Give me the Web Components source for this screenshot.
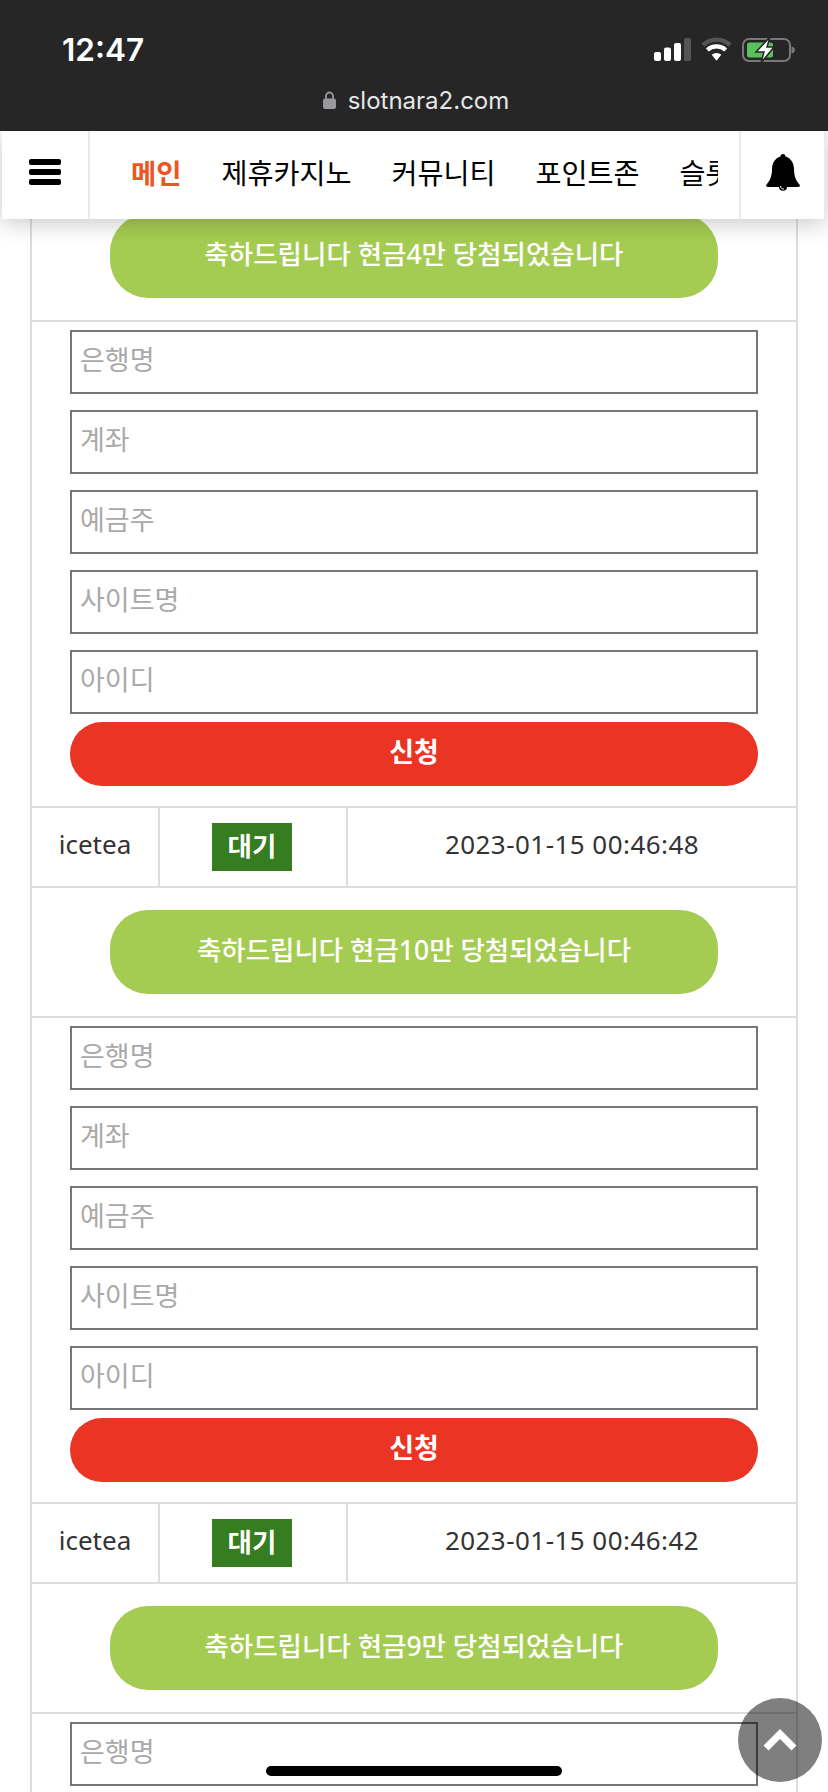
<!DOCTYPE html>
<html>
<head>
<meta charset="utf-8">
<title>slotnara2</title>
<style>
html, body { margin: 0; padding: 0; background: #fff; }
body { font-family: "Noto Sans", "Noto Sans CJK KR", sans-serif; width: 828px; height: 1792px; overflow: hidden; position: relative; }
</style>
</head>
<body>
<status-bar time="12:47" url="slotnara2.com"></status-bar>
<top-nav></top-nav>
<win-list>
  <win-entry prize="축하드립니다 현금4만 당첨되었습니다" user="icetea" date="2023-01-15 00:46:48"></win-entry>
  <win-entry prize="축하드립니다 현금10만 당첨되었습니다" user="icetea" date="2023-01-15 00:46:42"></win-entry>
  <win-entry prize="축하드립니다 현금9만 당첨되었습니다" partial></win-entry>
</win-list>
<scroll-top></scroll-top>
<home-bar></home-bar>

<script>
class StatusBar extends HTMLElement {
    connectedCallback(){
        this.attachShadow({mode:"open"});
        this.shadowRoot.innerHTML = `
<style>
:host { display: block; height: 131px; background: #262626; color: #fff; box-sizing: border-box; position: relative; z-index: 3; font-family: Inter, "Noto Sans", sans-serif; }
#top { display: flex; justify-content: space-between; align-items: center; height: 82px; padding: 17px 33px 0 62px; box-sizing: border-box; }
#time { font-size: 31.500px; font-weight: 600; line-height: 1; }
#icons { display: flex; align-items: center; gap: 10px; }
#url { display: flex; justify-content: center; align-items: center; gap: 12px; height: 22px; margin-top: 7px; padding-left: 4px; font-size: 24px; color: #e6e6e6; }
svg { display: block; }
</style>
<div id="top">
  <div id="time">${this.getAttribute("time")}</div>
  <div id="icons">
    <svg width="37" height="24" viewBox="0 0 37 24">
      <rect x="0" y="14" width="7" height="9" rx="2" fill="#fff"/>
      <rect x="10" y="9.500" width="7" height="13.500" rx="2" fill="#fff"/>
      <rect x="20" y="5" width="7" height="18" rx="2" fill="#fff"/>
      <rect x="30" y="0" width="7" height="23" rx="2" fill="#555"/>
    </svg>
    <svg width="31" height="25" viewBox="0 0 32 25">
      <path d="M2 8 A 20 20 0 0 1 30 8" fill="none" stroke="#555" stroke-width="4.500"/>
      <path d="M6.500 13 A 14 14 0 0 1 25.500 13" fill="none" stroke="#fff" stroke-width="4.500"/>
      <path d="M11 18 A 7.500 7.500 0 0 1 21 18 L 16 24 Z" fill="#fff"/>
    </svg>
    <svg width="53" height="26" viewBox="0 0 53 26">
      <rect x="1" y="2" width="47" height="22" rx="6" fill="none" stroke="#777" stroke-width="2"/>
      <rect x="5" y="5.500" width="26" height="15" rx="2.500" fill="#5ac05e"/>
      <path d="M49.500 9.500 Q53 10.500 53 13 Q53 15.500 49.500 16.500 Z" fill="#777"/>
      <path d="M28 0 L14 15 L22 15 L19 26 L32 10 L25 10 Z" fill="#fff" stroke="#262626" stroke-width="1.500"/>
    </svg>
  </div>
</div>
<div id="url">
  <svg width="13" height="18" viewBox="0 0 13 18">
    <path d="M3 8 V5 a3.500 3.500 0 0 1 7 0 V8" fill="none" stroke="#98989d" stroke-width="1.800"/>
    <rect x="0" y="7.500" width="13" height="10.500" rx="2" fill="#98989d"/>
  </svg>
  <span>${this.getAttribute("url")}</span>
</div>`;
    }
}
customElements.define("status-bar", StatusBar);

class TopNav extends HTMLElement {
    connectedCallback(){
        this.attachShadow({mode:"open"});
        this.shadowRoot.innerHTML = `
<style>
:host { display: flex; position: relative; z-index: 2; height: 88px; margin: 0 2px; background: #fff; box-shadow: 0 4px 22px rgba(0,0,0,.22); font-family: Inter, "Noto Sans CJK KR", sans-serif; }
#menu { width: 86px; flex: none; border-right: 2px solid #ebebeb; display: flex; align-items: center; justify-content: center; padding-bottom: 6px; }
#items { flex: 1; min-width: 0; display: flex; align-items: center; gap: 40px; padding: 0 0 7px 41px; margin-right: 21px; overflow: hidden; white-space: nowrap; font-size: 28.250px; color: #000; }
#items span { flex: none; }
#items .on { color: #ee5524; font-weight: 700; font-size: 27.500px; }
#bell { width: 87px; flex: none; border-left: 2px solid #ebebeb; border-right: 2px solid #ebebeb; box-sizing: border-box; display: flex; align-items: center; justify-content: center; padding-bottom: 6px; }
svg { display: block; }
</style>
<div id="menu">
  <svg width="32" height="26" viewBox="0 0 32 26">
    <rect x="0" y="0" width="32" height="6" rx="2"/>
    <rect x="0" y="10" width="32" height="6" rx="2"/>
    <rect x="0" y="20" width="32" height="6" rx="2"/>
  </svg>
</div>
<div id="items">
  <span class="on">메인</span><span>제휴카지노</span><span>커뮤니티</span><span>포인트존</span><span>슬롯게임</span>
</div>
<div id="bell">
  <svg width="34" height="37" viewBox="0 0 34 37">
    <path d="M17 0 c1.500 0 2.500 1 2.500 2.500 C25 4 28 9.500 28 15 c0 8 2.500 12 5.500 15.500 c.8 1 .3 2.500 -1.200 2.500 H1.700 C.2 33 -.3 31.500 .5 30.500 C3.500 27 6 23 6 15 C6 9.500 9 4 14.500 2.500 C14.500 1 15.500 0 17 0 Z"/>
    <path d="M13 33 a4 3.800 0 0 0 8 0 Z"/>
    <path d="M14.500 32 a3 3 0 0 0 3.500 3" fill="none" stroke="#fff" stroke-width="1"/>
  </svg>
</div>`;
    }
}
customElements.define("top-nav", TopNav);

class WinList extends HTMLElement {
    connectedCallback(){
        this.attachShadow({mode:"open"});
        this.shadowRoot.innerHTML = `
<style>
:host { display: block; height: 1600px; overflow: hidden; margin: -27px 30px 0 30px; border-left: 2px solid #ddd; border-right: 2px solid #ddd; }
</style>
<slot></slot>`;
    }
}
customElements.define("win-list", WinList);

class WinEntry extends HTMLElement {
    connectedCallback(){
        this.attachShadow({mode:"open"});
        var partial = this.hasAttribute("partial");
        var fields = partial ? ["은행명"] : ["은행명","계좌","예금주","사이트명","아이디"];
        this.shadowRoot.innerHTML = `
<style>
:host { display: block; }
#prize { height: 130px; box-sizing: border-box; padding-top: 22px; display: flex; justify-content: center; border-bottom: 2px solid #ddd; }
#prize div { width: 608px; height: 84px; border-radius: 38px; background: #a5cc52; color: #fff; font-size: 26.500px; font-weight: 500; display: flex; align-items: center; justify-content: center; padding-bottom: 8px; box-sizing: border-box; }
form { display: flex; flex-direction: column; padding: 8px 38px 20px 38px; border-bottom: 2px solid #ddd; }
.in { height: 64px; box-sizing: border-box; border: 2px solid #767676; margin-bottom: 16px; padding: 0 8px 8px 8px; font-size: 27px; color: #a9a9a9; display: flex; align-items: center; }
.in.last { margin-bottom: 8px; }
#go { height: 64px; border-radius: 32px; background: #ea3424; color: #fff; font-size: 27px; font-weight: 700; display: flex; align-items: center; justify-content: center; padding-bottom: 7px; box-sizing: border-box; }
#info { display: grid; grid-template-columns: 126px 188px 1fr; height: 80px; box-sizing: border-box; border-bottom: 2px solid #ddd; color: #333; font-size: 26px; }
#info > div { display: flex; align-items: center; justify-content: center; padding-bottom: 6px; }
#info > div + div { border-left: 2px solid #ddd; }
#info > div:nth-child(2) { padding-bottom: 0; padding-right: 2px; }
#info > div:nth-child(3) { letter-spacing: .45px; }
#badge { width: 80px; height: 48px; background: #367c20; color: #fff; font-size: 26.500px; font-weight: 700; display: flex; align-items: center; justify-content: center; padding-bottom: 6px; box-sizing: border-box; }
</style>
<div id="prize"><div>${this.getAttribute("prize")}</div></div>
${partial ? `<form>
  <div class="in">${fields[0]}</div>
</form>` : `<form>
  ${fields.map((f,i) => `<div class="in${i==4?" last":""}">${f}</div>`).join("")}
  <div id="go">신청</div>
</form>
<div id="info">
  <div>${this.getAttribute("user")}</div>
  <div><div id="badge">대기</div></div>
  <div>${this.getAttribute("date")}</div>
</div>`}`;
    }
}
customElements.define("win-entry", WinEntry);

class ScrollTop extends HTMLElement {
    connectedCallback(){
        this.attachShadow({mode:"open"});
        this.shadowRoot.innerHTML = `
<style>
:host { display: flex; align-items: center; justify-content: center; position: absolute; left: 738px; top: 1698px; width: 84px; height: 84px; border-radius: 50%; background: rgba(0,0,0,.5); z-index: 4; }
</style>
<svg width="34" height="24" viewBox="0 0 34 24"><path d="M3 20 L17 6 L31 20" fill="none" stroke="#fff" stroke-width="7"/></svg>`;
    }
}
customElements.define("scroll-top", ScrollTop);

class HomeBar extends HTMLElement {
    connectedCallback(){
        this.attachShadow({mode:"open"});
        this.shadowRoot.innerHTML = `
<style>
:host { display: block; position: absolute; left: 266px; top: 1766px; width: 296px; height: 10px; border-radius: 5px; background: #000; z-index: 5; }
</style>`;
    }
}
customElements.define("home-bar", HomeBar);
</script>
</body>
</html>
